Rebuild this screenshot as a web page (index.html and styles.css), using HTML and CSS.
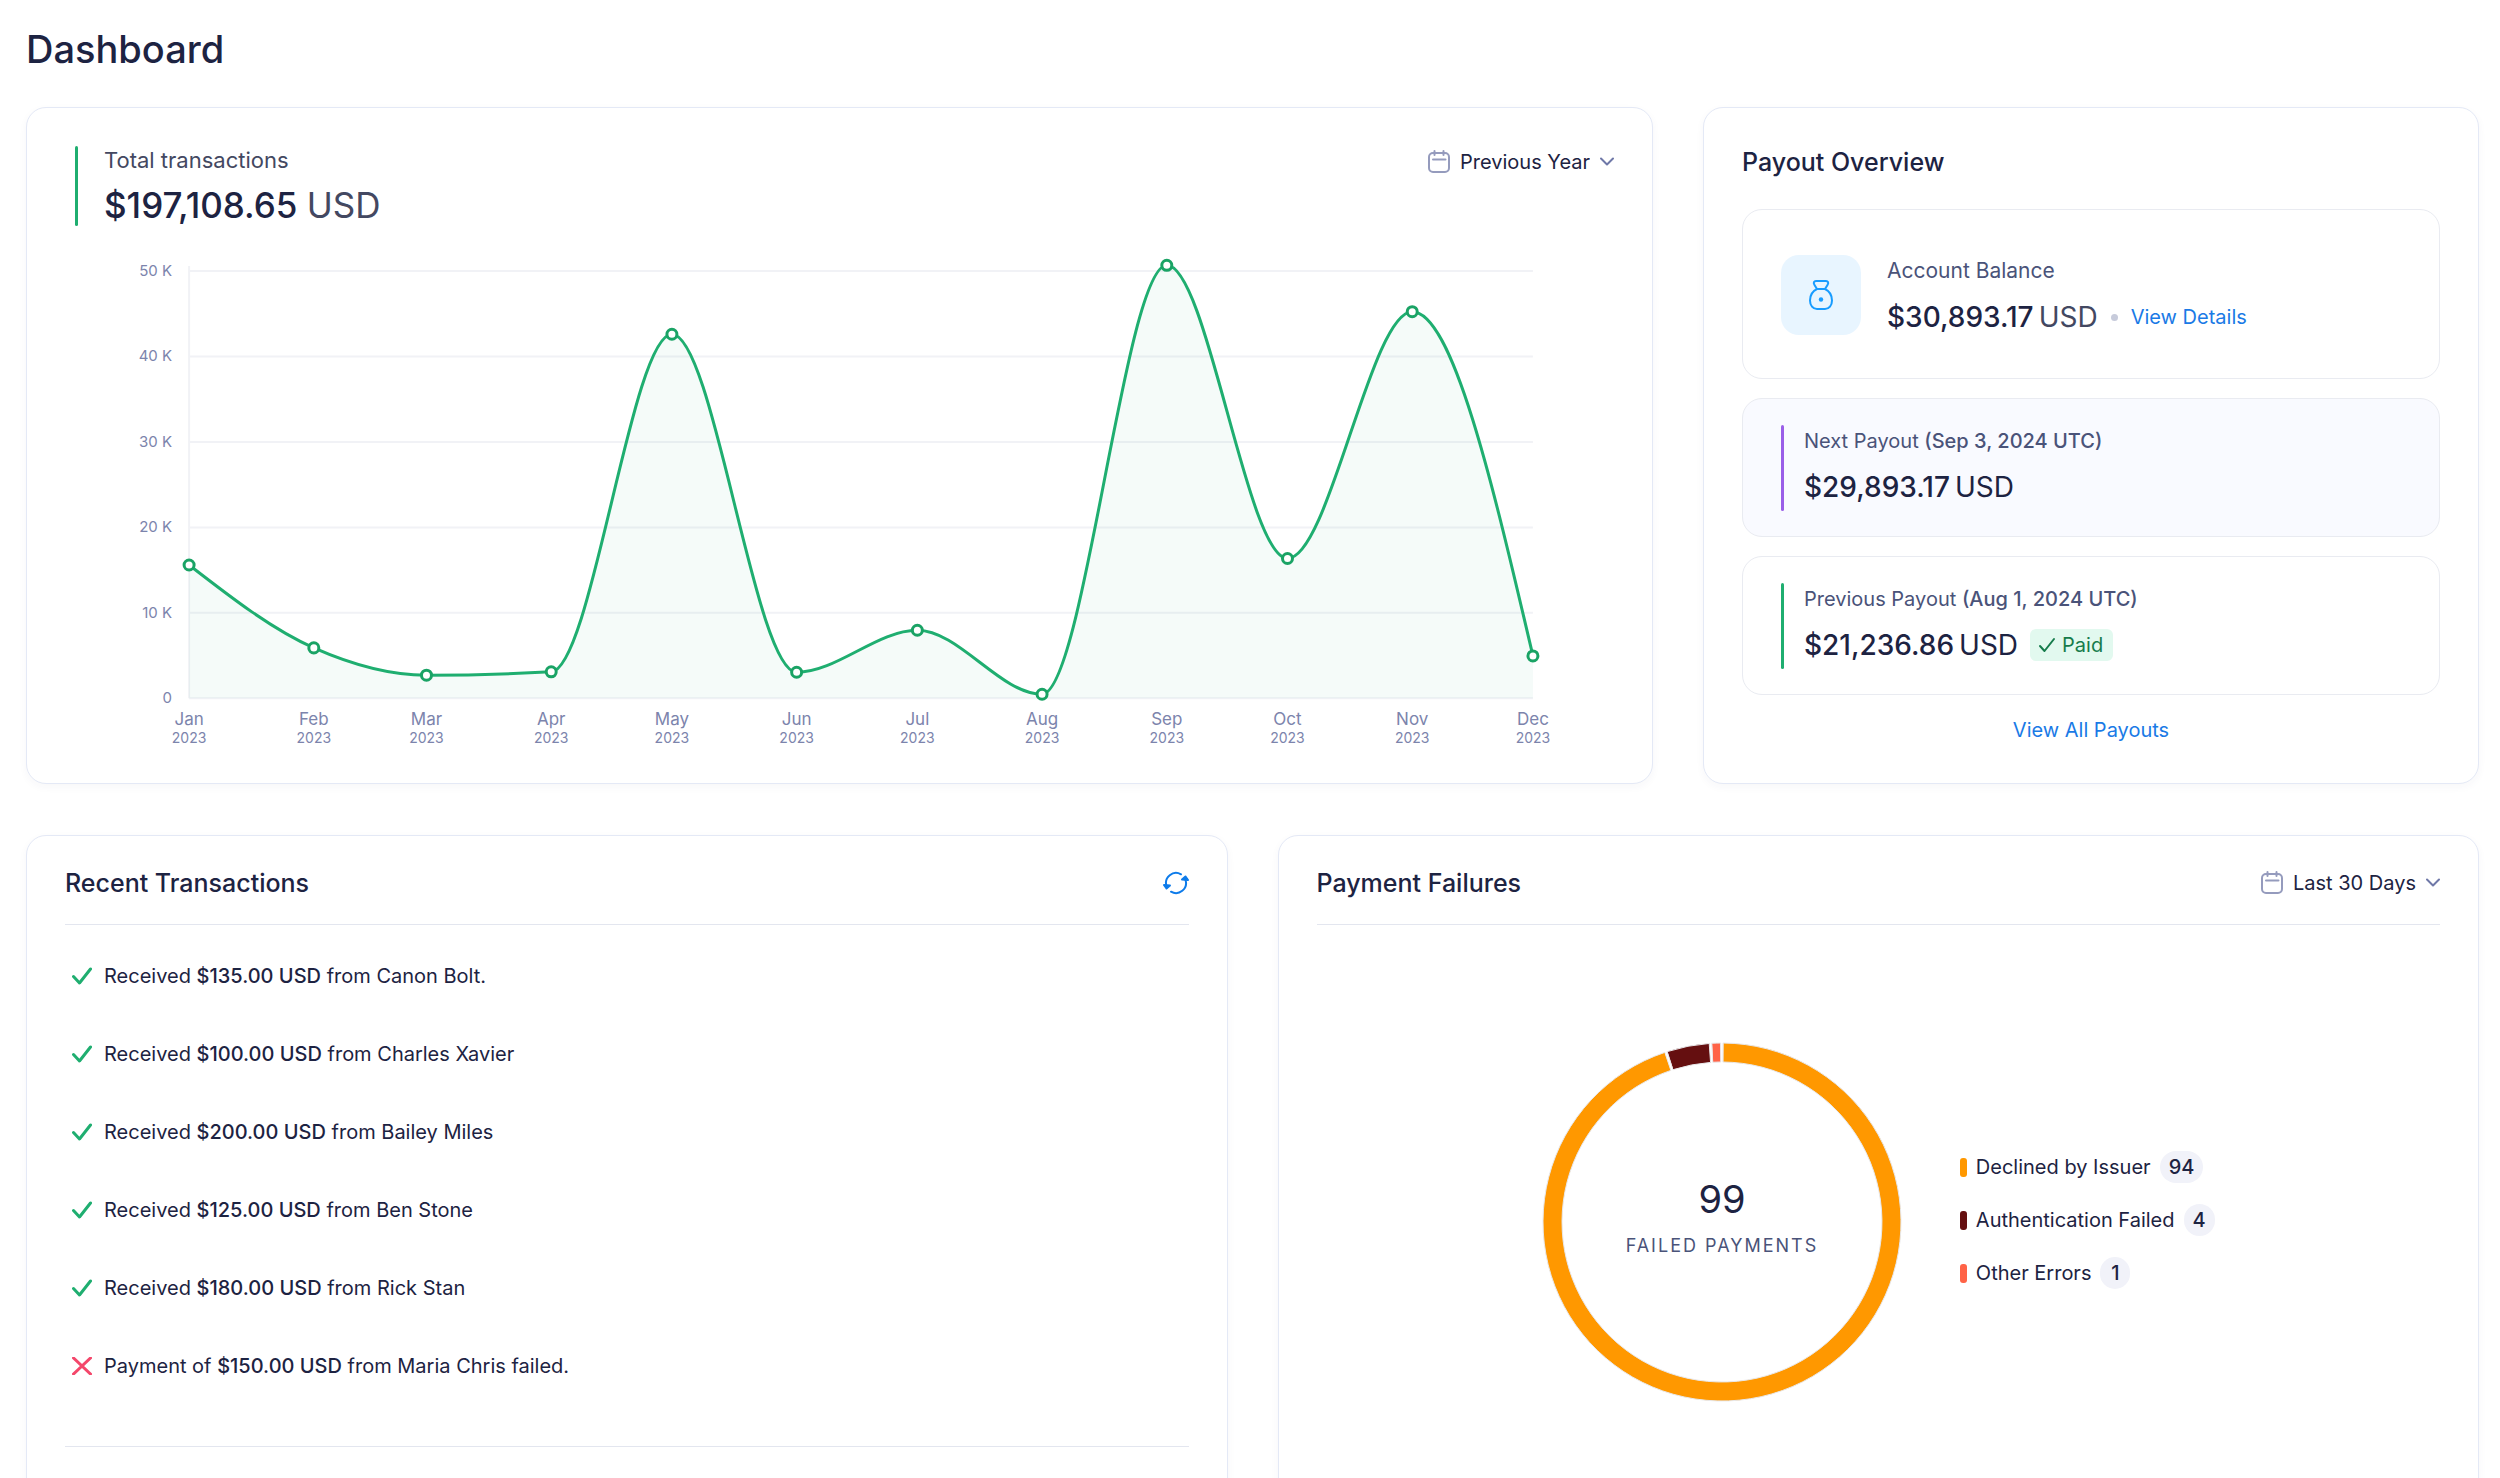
FILE: index.html
```html
<!DOCTYPE html>
<html lang="en">
<head>
<meta charset="UTF-8">
<meta name="viewport" content="width=device-width, initial-scale=1.0">
<title>Dashboard</title>
<link rel="stylesheet" href="styles.css">
</head>
<body>

<main class="page">
<h1>Dashboard</h1>

<!-- Top row -->
<div class="row row-top">

    <section class="card chart-card">
        <div class="chart-head">
            <div class="metric green">
                <p class="label">Total transactions</p>
                <p class="total">$197,108.65 <span>USD</span></p>
            </div>
            <div class="filter">
                <svg class="calendar" viewBox="0 0 22 24" aria-hidden="true">
                    <rect x="1" y="3" width="20" height="19" rx="4"/>
                    <path d="M6.500 1v4M15.500 1v4M5 9.500h12.500"/>
                </svg>
                <select aria-label="Transactions period">
                    <option>Previous Year</option>
                    <option>This Year</option>
                </select>
                <svg class="chevron" viewBox="0 0 14 10" aria-hidden="true"><path d="M1 1.500l6 6 6-6"/></svg>
            </div>
        </div>
        <svg class="line-chart" id="line-chart" viewBox="0 0 1548 530" role="img" aria-label="Total transactions by month"></svg>
    </section>

    <section class="card payout-card">
        <h2>Payout Overview</h2>
        <div class="box balance">
            <div class="bag">
                <svg viewBox="0 0 26 32" aria-hidden="true">
                    <path d="M9 10L6.500 6C5 3.500 6 2 8 2h10c2 0 3 1.500 1.500 4L17 10"/>
                    <path d="M9 10h8c5 2.500 7 7 7 11.500 0 5-3 8.500-7 8.500H9c-4 0-7-3.500-7-8.500C2 17 4 12.500 9 10z"/>
                    <circle cx="13" cy="20.500" r="2.200"/>
                </svg>
            </div>
            <div class="box-text">
                <p class="label">Account Balance</p>
                <p class="amount">$30,893.17<span class="grey">USD</span><i class="dot"></i><a href="#">View Details</a></p>
            </div>
        </div>
        <div class="box next">
            <div class="metric purple">
                <p class="label">Next Payout <b>(Sep 3, 2024 UTC)</b></p>
                <p class="amount">$29,893.17<span>USD</span></p>
            </div>
        </div>
        <div class="box">
            <div class="metric green">
                <p class="label">Previous Payout <b>(Aug 1, 2024 UTC)</b></p>
                <p class="amount">$21,236.86<span>USD</span>
                    <span class="badge"><svg viewBox="0 0 18 16" aria-hidden="true"><path d="M2 9l4.500 5L16 2"/></svg>Paid</span>
                </p>
            </div>
        </div>
        <a class="all-payouts" href="#">View All Payouts</a>
    </section>
</div>

<!-- Bottom row -->
<div class="row row-bottom">

    <section class="card">
        <div class="card-head">
            <h2>Recent Transactions</h2>
            <button class="refresh" type="button" aria-label="Refresh">
                <svg viewBox="0 0 26 24" aria-hidden="true">
                    <path d="M18 3.300A10 10 0 0 0 3.500 15"/>
                    <path d="M8 20.700A10 10 0 0 0 22.500 9"/>
                    <path class="head" d="M1 14l6 .5-3.500 3zM25 9l-6-.5 3.500-3z"/>
                </svg>
            </button>
        </div>
        <ul class="transactions">
            <li><svg class="ok" viewBox="0 0 20 18" aria-hidden="true"><path d="M1.500 9.500l6 6.500L18.500 2"/></svg><p>Received <b>$135.00 USD</b> from Canon Bolt.</p></li>
            <li><svg class="ok" viewBox="0 0 20 18" aria-hidden="true"><path d="M1.500 9.500l6 6.500L18.500 2"/></svg><p>Received <b>$100.00 USD</b> from Charles Xavier</p></li>
            <li><svg class="ok" viewBox="0 0 20 18" aria-hidden="true"><path d="M1.500 9.500l6 6.500L18.500 2"/></svg><p>Received <b>$200.00 USD</b> from Bailey Miles</p></li>
            <li><svg class="ok" viewBox="0 0 20 18" aria-hidden="true"><path d="M1.500 9.500l6 6.500L18.500 2"/></svg><p>Received <b>$125.00 USD</b> from Ben Stone</p></li>
            <li><svg class="ok" viewBox="0 0 20 18" aria-hidden="true"><path d="M1.500 9.500l6 6.500L18.500 2"/></svg><p>Received <b>$180.00 USD</b> from Rick Stan</p></li>
            <li><svg class="fail" viewBox="0 0 20 18" aria-hidden="true"><path d="M1.500 1l17 16M18.500 1l-17 16"/></svg><p>Payment of <b>$150.00 USD</b> from Maria Chris failed.</p></li>
        </ul>
    </section>

    <section class="card">
        <div class="card-head">
            <h2>Payment Failures</h2>
            <div class="filter">
                <svg class="calendar" viewBox="0 0 22 24" aria-hidden="true">
                    <rect x="1" y="3" width="20" height="19" rx="4"/>
                    <path d="M6.500 1v4M15.500 1v4M5 9.500h12.500"/>
                </svg>
                <select aria-label="Failures period">
                    <option>Last 30 Days</option>
                    <option>Last 7 Days</option>
                </select>
                <svg class="chevron" viewBox="0 0 14 10" aria-hidden="true"><path d="M1 1.500l6 6 6-6"/></svg>
            </div>
        </div>
        <div class="failures">
            <svg class="donut" id="donut" viewBox="0 0 360 360" role="img" aria-label="Failed payments by reason"></svg>
            <ul class="legend">
                <li><i class="issuer"></i>Declined by Issuer<span>94</span></li>
                <li><i class="auth"></i>Authentication Failed<span>4</span></li>
                <li><i class="other"></i>Other Errors<span>1</span></li>
            </ul>
        </div>
    </section>
</div>
</main>

<script src="script.js"></script>
</body>
</html>
```
FILE: styles.css
```css
* {
box-sizing: border-box;
}
body {
margin: 0;
font-family: Inter, "Liberation Sans", sans-serif;
font-size: 20px;
line-height: 32px;
color: #1d2342;
background-color: #fff;
}
h1, h2, p, ul {
margin: 0;
padding: 0;
}
ul {
list-style: none;
}
b {
font-weight: 500;
}
a {
color: #1a7ae6;
text-decoration: none;
}
svg {
display: block;
fill: none;
stroke-linecap: round;
stroke-linejoin: round;
}
.page {
height: 100vh;
overflow: hidden;
padding: 24px 21px 0 26px;
}
h1 {
font-size: 38px;
line-height: 51px;
font-weight: 500;
margin-bottom: 32px;
}
h2 {
font-size: 25px;
line-height: 32px;
font-weight: 500;
}
.row {
display: grid;
gap: 50px;
}
.row-top {
grid-template-columns: 1627fr 776fr;
margin-bottom: 51px;
}
.row-bottom {
grid-template-columns: 1fr 1fr;
}
.row-bottom .card {
min-height: 720px;
}
.card {
padding: 38px 38px 37px;
border: 1px solid #e4e9f6;
border-radius: 20px;
background-color: #fff;
box-shadow: 0 3px 8px rgba(40, 50, 110, 0.04);
}

/* line chart */
.chart-card {
padding-bottom: 27px;
}
.chart-head {
display: flex;
justify-content: space-between;
align-items: flex-start;
padding-left: 10px;
}
.metric {
position: relative;
padding-left: 23px;
}
.metric::before {
content: "";
position: absolute;
left: 0;
top: 0;
bottom: 0;
width: 3px;
border-radius: 2px;
background-color: #1fae70;
}
.metric.purple::before {
background-color: #9a5ee8;
}
.label {
color: #4a5379;
}
.chart-head .metric {
height: 80px;
padding-left: 29px;
}
.chart-head .label {
color: #434861;
font-size: 22px;
line-height: 28px;
}
.total {
font-size: 35px;
line-height: 62px;
font-weight: 500;
}
.total span {
font-weight: 400;
color: #434861;
}
.filter {
display: flex;
align-items: center;
height: 32px;
}
.filter select {
appearance: none;
field-sizing: content;
border: 0;
margin: 0 10px;
padding: 0;
font: inherit;
color: inherit;
background: none;
}
.calendar {
width: 22px;
height: 24px;
stroke: #959bbd;
stroke-width: 2;
}
.chevron {
width: 14px;
height: 10px;
stroke: #6f78a8;
stroke-width: 2;
}
.line-chart {
width: 100%;
height: auto;
}
.line-chart text {
fill: #7c84ac;
font-size: 15px;
}
.line-chart .month {
font-size: 17px;
text-anchor: middle;
}
.line-chart .year {
font-size: 14px;
text-anchor: middle;
}
.line-chart .tick {
text-anchor: end;
}
.line-chart .grid {
stroke: #f1f2f6;
stroke-width: 2;
stroke-linecap: butt;
}
.line-chart .area {
fill: rgba(31, 160, 110, 0.045);
}
.line-chart .line {
stroke: #1fae70;
stroke-width: 3;
}
.line-chart circle {
fill: #fff;
stroke: #1aa365;
stroke-width: 3;
}

/* payouts */
.payout-card {
display: flex;
flex-direction: column;
}
.payout-card h2 {
margin-bottom: 31px;
}
.box {
padding: 26px 38px 25px;
border: 1px solid #e9ebf1;
border-radius: 20px;
margin-bottom: 19px;
}
.box.next {
background-color: #f9faff;
}
.box.balance {
display: flex;
align-items: flex-start;
gap: 26px;
padding: 45px 38px 37px;
}
.bag {
display: flex;
align-items: center;
justify-content: center;
width: 80px;
height: 80px;
border-radius: 18px;
background-color: #e8f5ff;
}
.bag svg {
width: 26px;
height: 32px;
stroke: #189cff;
stroke-width: 2;
}
.bag circle {
fill: #189cff;
stroke: none;
}
.balance .label {
font-size: 21px;
}
.amount {
display: flex;
align-items: center;
margin-top: 6px;
font-size: 28px;
line-height: 48px;
font-weight: 500;
}
.amount span {
font-weight: 400;
margin-left: 5px;
}
.amount .grey {
color: #434861;
}
.amount .dot {
width: 7px;
height: 7px;
border-radius: 50%;
margin: 0 13px;
background-color: #c7cbdb;
}
.amount a {
font-size: 20px;
font-weight: 400;
}
.amount .badge {
display: flex;
align-items: center;
gap: 6px;
margin-left: 12px;
padding: 0 10px 0 8px;
border-radius: 6px;
font-size: 20px;
line-height: 32px;
color: #167c4c;
background-color: #e2f9ef;
}
.badge svg {
width: 18px;
height: 16px;
stroke: #167c4c;
stroke-width: 2;
}
.all-payouts {
align-self: center;
}

/* bottom cards */
.card-head {
display: flex;
justify-content: space-between;
align-items: center;
padding-bottom: 25px;
margin-top: -7px;
border-bottom: 1px solid #e3e6ef;
}
.refresh {
border: 0;
padding: 0;
background: none;
}
.refresh svg {
width: 26px;
height: 24px;
stroke: #0d7bea;
stroke-width: 2;
}
.refresh .head {
fill: #0d7bea;
}
.transactions {
display: flex;
flex-direction: column;
gap: 46px;
padding: 35px 0 64px;
border-bottom: 1px solid #e3e6ef;
}
.transactions li {
display: flex;
align-items: center;
gap: 12px;
padding-left: 7px;
}
.transactions svg {
width: 20px;
height: 18px;
stroke-width: 3;
}
.ok {
stroke: #1fae70;
}
.fail {
stroke: #f4476b;
}
.failures {
display: flex;
justify-content: center;
align-items: center;
gap: 58px;
padding-top: 117px;
}
.donut {
width: 360px;
height: 360px;
}
.donut path {
stroke: #e8e8ea;
stroke-width: 1;
}
.donut text {
text-anchor: middle;
fill: #1d2342;
font-size: 38px;
}
.donut .caption {
fill: #4a5379;
font-size: 18px;
letter-spacing: 2px;
}
.legend {
display: flex;
flex-direction: column;
gap: 21px;
padding-bottom: 4px;
}
.legend li {
display: flex;
align-items: center;
}
.legend i {
width: 7px;
height: 19px;
border-radius: 3px;
margin-right: 9px;
}
.legend span {
min-width: 30px;
padding: 0 9px;
margin-left: 9px;
border-radius: 16px;
text-align: center;
font-weight: 500;
background-color: #f1f2f9;
}
.issuer {
background-color: #ff9800;
}
.auth {
background-color: #650f10;
}
.other {
background-color: #ff6347;
}
```
FILE: script.js
```js
const months = ['Jan', 'Feb', 'Mar', 'Apr', 'May', 'Jun', 'Jul', 'Aug', 'Sep', 'Oct', 'Nov', 'Dec'];
const startDay = [0, 31, 59, 90, 120, 151, 181, 212, 243, 273, 304, 334];
const amounts = [15.6, 5.9, 2.7, 3.1, 42.6, 3.05, 7.96, 0.47, 50.67, 16.36, 45.24, 4.96];

const left = 124, right = 1467, base = 472, top50 = 45;

function xPos(i) {
    return left + startDay[i] / 334 * (right - left);
}
function yPos(v) {
    return base - v / 50 * (base - top50);
}

// Monotone cubic through the points, so the curve never overshoots
function curve(pts) {
    const n = pts.length;
    const h = [], s = [], t = [];
    for (let i = 0; i < n - 1; i++) {
        h.push(pts[i + 1].x - pts[i].x);
        s.push((pts[i + 1].y - pts[i].y) / h[i]);
    }
    for (let i = 1; i < n - 1; i++) {
        const p = (s[i - 1] * h[i] + s[i] * h[i - 1]) / (h[i - 1] + h[i]);
        t[i] = (Math.sign(s[i - 1]) + Math.sign(s[i])) * Math.min(Math.abs(s[i - 1]), Math.abs(s[i]), Math.abs(p) / 2);
    }
    t[0] = (3 * s[0] - t[1]) / 2;
    t[n - 1] = (3 * s[n - 2] - t[n - 2]) / 2;
    let d = `M${pts[0].x} ${pts[0].y}`;
    for (let i = 0; i < n - 1; i++) {
        const k = h[i] / 3;
        d += `C${pts[i].x + k} ${pts[i].y + k * t[i]} ${pts[i + 1].x - k} ${pts[i + 1].y - k * t[i + 1]} ${pts[i + 1].x} ${pts[i + 1].y}`;
    }
    return d;
}

function drawLineChart() {
    const pts = amounts.map((v, i) => ({ x: xPos(i), y: yPos(v) }));
    const line = curve(pts);
    let out = `<path class="grid" d="M${left} ${top50 - 5}V${base}"/>`;
    for (let v = 0; v <= 50; v += 10) {
        out += `<path class="grid" d="M${left} ${yPos(v)}H${right}"/>`;
        out += `<text class="tick" x="107" y="${yPos(v) + 5}">${v ? v + ' K' : '0'}</text>`;
    }
    out += `<path class="area" d="${line}V${base}H${left}Z"/><path class="line" d="${line}"/>`;
    pts.forEach((p, i) => {
        out += `<circle cx="${p.x}" cy="${p.y}" r="5"/>`;
        out += `<text class="month" x="${p.x}" y="499">${months[i]}</text>`;
        out += `<text class="year" x="${p.x}" y="517">2023</text>`;
    });
    document.getElementById('line-chart').innerHTML = out;
}

function drawDonut() {
    const parts = [
        { value: 94, color: '#ff9800' },
        { value: 4, color: '#650f10' },
        { value: 1, color: '#ff6347' }
    ];
    const c = 180, outer = 179, inner = 160, gap = 0.008;
    const point = (r, a) => `${c + r * Math.sin(a)} ${c - r * Math.cos(a)}`;
    let angle = 0;
    let out = '';
    parts.forEach(part => {
        const a = angle + gap;
        angle += part.value / 99 * Math.PI * 2;
        const b = angle - gap;
        const large = b - a > Math.PI ? 1 : 0;
        out += `<path fill="${part.color}" d="M${point(outer, a)}A${outer} ${outer} 0 ${large} 1 ${point(outer, b)}L${point(inner, b)}A${inner} ${inner} 0 ${large} 0 ${point(inner, a)}Z"/>`;
    });
    out += `<text x="180" y="171">99</text><text class="caption" x="180" y="210">FAILED PAYMENTS</text>`;
    document.getElementById('donut').innerHTML = out;
}

drawLineChart();
drawDonut();
```
